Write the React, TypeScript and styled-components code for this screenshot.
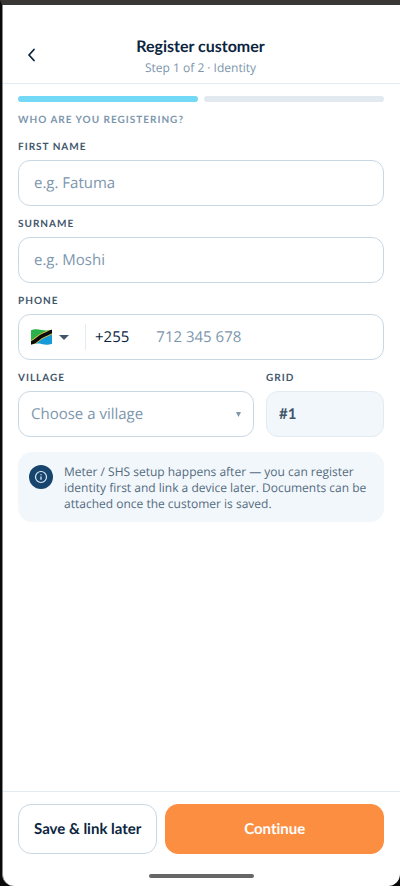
import React from "react";
import styled, { createGlobalStyle } from "styled-components";

const color = {
  ink: "#0b2540",
  slate: "#3f566b",
  muted: "#7c96ad",
  line: "#c9d7e3",
  hairline: "#e3ebf2",
  wash: "#f2f7fb",
  navy: "#17456d",
  sky: "#74d8f7",
  orange: "#fc8e42",
};

const heading = `Lato, "Open Sans", sans-serif`;

const GlobalStyle = createGlobalStyle`
  *, *::before, *::after { box-sizing: border-box; }
  body { margin: 0; background: #0a0a0a; font-family: "Open Sans", "Noto Sans", sans-serif; color: ${color.ink}; text-rendering: geometricPrecision; font-variant-ligatures: none; }
  button, input, select { font: inherit; color: inherit; margin: 0; text-rendering: inherit; }
`;

const Device = styled.div`
  display: flex;
  min-height: 100vh;
  border-top: 5px solid #383735;
  border-left: 2px solid #0a0a0a;
`;

const Screen = styled.main`
  flex: 1;
  min-width: 0;
  display: flex;
  flex-direction: column;
  background: #fff;
  border-left: 1px solid #8b8b8b;
  border-radius: 0 0 12px 12px;
`;

const Header = styled.header`
  display: grid;
  grid-template-columns: 36px 1fr 36px;
  align-items: center;
  padding: 30px 13px 6px 11px;
  border-bottom: 1px solid ${color.hairline};
`;

const BackButton = styled.button`
  display: flex;
  align-items: center;
  justify-content: center;
  height: 36px;
  padding: 0;
  border: 0;
  background: none;
  cursor: pointer;
`;

const Titles = styled.div`
  text-align: center;
`;

const Title = styled.h1`
  margin: 0;
  font: 700 16px/24px ${heading};
`;

const Step = styled.p`
  margin: 0;
  font-size: 12px;
  line-height: 18px;
  color: ${color.muted};
`;

const Form = styled.form`
  flex: 1;
  display: flex;
  flex-direction: column;
`;

const Body = styled.div`
  flex: 1;
  display: flex;
  flex-direction: column;
  gap: 10px;
  padding: 12px 16px 16px 15px;
`;

const Progress = styled.div`
  display: grid;
  grid-template-columns: 1fr 1fr;
  gap: 6px;
`;

const Segment = styled.span<{ $done?: boolean }>`
  height: 6px;
  border-radius: 3px;
  background: ${(p) => (p.$done ? color.sky : "#e3eaef")};
`;

const SectionTitle = styled.h2`
  margin: 0;
  font: 700 10px/17px ${heading};
  letter-spacing: 1px;
  text-transform: uppercase;
  color: ${color.muted};
`;

const Field = styled.div`
  display: flex;
  flex-direction: column;
  gap: 5px;
  min-width: 0;
`;

const Label = styled.label`
  font: 700 10px/16px ${heading};
  letter-spacing: 1px;
  text-transform: uppercase;
  color: ${color.slate};
`;

const TextInput = styled.input`
  width: 100%;
  height: 46px;
  padding: 0 15px;
  border: 1px solid ${color.line};
  border-radius: 12px;
  background: #fff;
  font-size: 15px;
  &::placeholder { color: ${color.muted}; opacity: 1; }
  &:read-only {
    padding: 0 12px;
    background: ${color.wash};
    border-color: ${color.hairline};
    color: ${color.slate};
    font: 700 15px ${heading};
  }
`;

const PhoneBox = styled.div`
  display: flex;
  align-items: center;
  height: 46px;
  padding-left: 12px;
  border: 1px solid ${color.line};
  border-radius: 12px;
`;

const CountryButton = styled.button`
  display: flex;
  align-items: center;
  gap: 7px;
  height: 26px;
  padding: 0 16px 0 0;
  border: 0;
  border-right: 1px solid ${color.hairline};
  background: none;
  cursor: pointer;
`;

const DialCode = styled.span`
  padding: 0 27px 0 9px;
  font-size: 15px;
`;

const PhoneInput = styled.input`
  flex: 1;
  min-width: 0;
  height: 40px;
  padding: 0;
  border: 0;
  background: none;
  font-size: 15px;
  &::placeholder { color: ${color.muted}; opacity: 1; }
`;

const Pair = styled.div`
  display: grid;
  grid-template-columns: 2fr 1fr;
  gap: 12px;
`;

const SelectBox = styled.div`
  display: grid;
  align-items: center;
  & > * { grid-area: 1 / 1; }
`;

const Select = styled.select`
  appearance: none;
  width: 100%;
  height: 46px;
  padding: 0 30px 0 12px;
  border: 1px solid ${color.line};
  border-radius: 12px;
  background: #fff;
  font-size: 15px;
  color: ${color.muted};
`;

const SelectArrow = styled.svg`
  justify-self: end;
  margin-right: 13px;
  pointer-events: none;
`;

const Note = styled.aside`
  display: flex;
  align-items: flex-start;
  gap: 11px;
  margin-top: 5px;
  padding: 12px 16px 10px 11px;
  border-radius: 14px;
  background: ${color.wash};
`;

const NoteIcon = styled.svg`
  flex: none;
  margin-top: 1px;
`;

const NoteText = styled.p`
  margin: 0;
  font-size: 12px;
  line-height: 16px;
  color: #526b80;
`;

const Footer = styled.footer`
  display: flex;
  gap: 8px;
  padding: 12px 16px 20px 15px;
  border-top: 1px solid ${color.hairline};
`;

const Button = styled.button<{ $primary?: boolean }>`
  flex: ${(p) => (p.$primary ? "1" : "none")};
  height: 50px;
  padding: 0 15px;
  border: 1px solid ${(p) => (p.$primary ? color.orange : color.line)};
  border-radius: 13px;
  background: ${(p) => (p.$primary ? color.orange : "#fff")};
  color: ${(p) => (p.$primary ? "#fff" : color.ink)};
  font: 700 15px/20px ${heading};
  font-variant-ligatures: none;
  cursor: pointer;
`;

const HomeBar = styled.div`
  align-self: center;
  width: 105px;
  height: 4px;
  margin-bottom: 8px;
  border-radius: 2px;
  background: #666;
`;

const TanzaniaFlag = () => (
  <svg width="21" height="16" viewBox="0 0 21 16" aria-hidden="true">
    <defs>
      <clipPath id="flag-wave">
        <path d="M0 1.300C4-.4 7 .2 10.500 1S17.500 1.500 21 .8V14.800C17 16.100 14 15.700 10.500 15S4 14.500 0 15.500Z" />
      </clipPath>
    </defs>
    <g clipPath="url(#flag-wave)">
      <path d="M0 0H21L0 16Z" fill="#2bb14c" />
      <path d="M21 0V16H0Z" fill="#159bd7" />
      <path d="M-2 15.500C5 12.500 8 8 12 6.500S18 4 23 1" fill="none" stroke="#e0c53c" strokeWidth="5.400" />
      <path d="M-2 15.500C5 12.500 8 8 12 6.500S18 4 23 1" fill="none" stroke="#0b0b0b" strokeWidth="3.800" />
    </g>
  </svg>
);

export default function App() {
  return (
    <>
      <GlobalStyle />
      <Device>
        <Screen>
          <Header>
            <BackButton type="button" aria-label="Back">
              <svg width="20" height="20" viewBox="0 0 20 20" fill="none" stroke={color.ink} strokeWidth="1.800" strokeLinecap="round" strokeLinejoin="round" aria-hidden="true">
                <path d="M12 3.500L7 9L12 14.500" />
              </svg>
            </BackButton>
            <Titles>
              <Title>Register customer</Title>
              <Step>Step 1 of 2 · Identity</Step>
            </Titles>
          </Header>
          <Form onSubmit={(e) => e.preventDefault()}>
            <Body>
              <Progress role="progressbar" aria-label="Registration progress" aria-valuemin={0} aria-valuemax={2} aria-valuenow={1}>
                <Segment $done />
                <Segment />
              </Progress>
              <SectionTitle>Who are you registering?</SectionTitle>
              <Field>
                <Label htmlFor="first-name">First name</Label>
                <TextInput id="first-name" placeholder="e.g. Fatuma" />
              </Field>
              <Field>
                <Label htmlFor="surname">Surname</Label>
                <TextInput id="surname" placeholder="e.g. Moshi" />
              </Field>
              <Field>
                <Label htmlFor="phone">Phone</Label>
                <PhoneBox>
                  <CountryButton type="button" aria-label="Country: Tanzania">
                    <TanzaniaFlag />
                    <svg width="10" height="5" viewBox="0 0 10 5" aria-hidden="true">
                      <path d="M0 0H10L5 5Z" fill={color.slate} />
                    </svg>
                  </CountryButton>
                  <DialCode>+255</DialCode>
                  <PhoneInput id="phone" type="tel" placeholder="712 345 678" />
                </PhoneBox>
              </Field>
              <Pair>
                <Field>
                  <Label htmlFor="village">Village</Label>
                  <SelectBox>
                    <Select id="village" defaultValue="">
                      <option value="">Choose a village</option>
                    </Select>
                    <SelectArrow width="5" height="5" viewBox="0 0 5 5" aria-hidden="true">
                      <path d="M0 0H5L2.500 5Z" fill={color.muted} />
                    </SelectArrow>
                  </SelectBox>
                </Field>
                <Field>
                  <Label htmlFor="grid">Grid</Label>
                  <TextInput id="grid" value="#1" readOnly />
                </Field>
              </Pair>
              <Note>
                <NoteIcon width="24" height="24" viewBox="0 0 24 24" fill="none" aria-hidden="true">
                  <circle cx="12" cy="12" r="12" fill={color.navy} />
                  <circle cx="12" cy="12" r="5.500" stroke="#dcecf7" strokeWidth="1.200" />
                  <path d="M12 11.500V14.700M12 9.200V10.200" stroke="#dcecf7" strokeWidth="1.300" />
                </NoteIcon>
                <NoteText>
                  Meter / SHS setup happens after — you can register identity first and link a device later. Documents can be attached once the customer is saved.
                </NoteText>
              </Note>
            </Body>
            <Footer>
              <Button type="button">Save &amp; link later</Button>
              <Button type="submit" $primary>Continue</Button>
            </Footer>
          </Form>
          <HomeBar />
        </Screen>
      </Device>
    </>
  );
}
